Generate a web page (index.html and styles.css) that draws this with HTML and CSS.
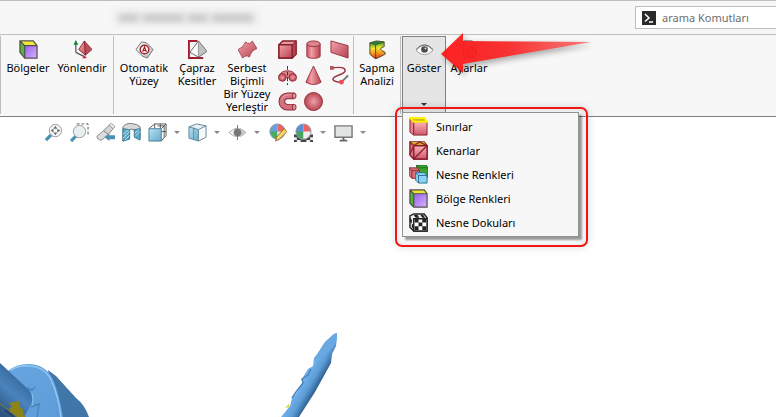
FILE: index.html
```html
<!DOCTYPE html>
<html lang="tr">
<head>
    <meta charset="UTF-8">
    <meta name="viewport" content="width=device-width, initial-scale=1.0">
    <title>Göster</title>
    <link rel="stylesheet" href="styles.css">
</head>
<body>
    <svg class="defs" width="0" height="0" aria-hidden="true">
        <defs>
            <linearGradient id="red" x1="0" y1="0" x2="1" y2="1"><stop offset="0" stop-color="#f3a3ab"/><stop offset="1" stop-color="#b5414f"/></linearGradient>
            <linearGradient id="redH"><stop offset="0" stop-color="#c65562"/><stop offset=".35" stop-color="#f0a0a8"/><stop offset="1" stop-color="#b8424f"/></linearGradient>
            <linearGradient id="pink" x1="0" y1="0" x2="0" y2="1"><stop offset="0" stop-color="#fbb3bb"/><stop offset="1" stop-color="#cf5a69"/></linearGradient>
            <radialGradient id="ball"><stop offset="0" stop-color="#eea0a7"/><stop offset="1" stop-color="#b84551"/></radialGradient>
            <linearGradient id="violet" x1="0" y1="0" x2="1" y2="1"><stop offset="0" stop-color="#9a63e8"/><stop offset="1" stop-color="#d6b2ff"/></linearGradient>
            <linearGradient id="gray" x1="0" y1="0" x2="1" y2="1"><stop offset="0" stop-color="#fff"/><stop offset="1" stop-color="#b5b8b9"/></linearGradient>
            <linearGradient id="blue" x1="0" y1="0" x2="1" y2="1"><stop offset="0" stop-color="#b9e2f3"/><stop offset="1" stop-color="#65a9c9"/></linearGradient>
            <linearGradient id="heat" x1="0" y1="0" x2="0" y2="1"><stop offset="0" stop-color="#35a53b"/><stop offset=".35" stop-color="#f0e42c"/><stop offset=".65" stop-color="#f39822"/><stop offset="1" stop-color="#d82920"/></linearGradient>
            <linearGradient id="arrowFill"><stop offset="0" stop-color="#ff1414"/><stop offset=".45" stop-color="#f62626"/><stop offset="1" stop-color="#fa7474"/></linearGradient>
            <linearGradient id="shaft" gradientUnits="userSpaceOnUse" x1="20" y1="60" x2="-4" y2="88"><stop offset="0" stop-color="#3a6da1"/><stop offset=".4" stop-color="#4a84bd"/><stop offset="1" stop-color="#2c547e"/></linearGradient>
            <linearGradient id="rod" gradientUnits="userSpaceOnUse" x1="298" y1="50" x2="320" y2="63"><stop offset="0" stop-color="#5a9bd5"/><stop offset=".4" stop-color="#6fb0ea"/><stop offset=".7" stop-color="#5c9dd8"/><stop offset="1" stop-color="#2f608f"/></linearGradient>
            <linearGradient id="body" x1="0" y1="0" x2="1" y2="1"><stop offset="0" stop-color="#67a6e0"/><stop offset="1" stop-color="#5d9cd8"/></linearGradient>
            <clipPath id="dot"><circle cx="10" cy="9" r="8"/></clipPath>
        </defs>
    </svg>

    <header class="title-bar">
        <div class="doc-name" aria-hidden="true"><i></i><i></i><i></i><i></i></div>
        <label class="search">
            <svg width="14" height="14" viewBox="0 0 14 14" aria-hidden="true"><rect width="14" height="14" fill="#2b2b2b"/><path d="M3 3l4 4-4 3.500M7 11h4" fill="none" stroke="#fff" stroke-width="1.500"/></svg>
            <input type="text" placeholder="arama Komutları" aria-label="arama Komutları">
        </label>
    </header>

    <nav class="ribbon">
        <div class="group regions">
            <button class="tool" type="button">
                <svg class="icon" viewBox="0 0 20 20"><path d="M1 1h14l4 5H6z" fill="#f2e63d"/><path d="M1 1l5 5v13l-5-6z" fill="#58b536"/><path d="M6 6h13v13H6z" fill="url(#violet)"/><path d="M1 1h14l4 5v13H6l-5-6zM1 1l5 5v13M6 6h13" fill="none" stroke="#505050" stroke-width="1.300"/></svg>
                <span>Bölgeler</span>
            </button>
            <button class="tool" type="button">
                <svg class="icon" viewBox="0 0 20 20"><path d="M3 13V4M3 13l10 5" fill="none" stroke="#555" stroke-width="1.300"/><path d="M.5 5L3 0l2.500 5z" fill="#11852b"/><path d="M11 16l4 3-5 .5z" fill="#e62a4c"/><path d="M12 1l8 9-7 6-7-6z" fill="url(#red)" stroke="#8c2733"/><path d="M12 1l8 9-7 6z" fill="#b64f5b"/><path d="M12 1l1 15" stroke="#7e2430"/></svg>
                <span>Yönlendir</span>
            </button>
        </div>

        <div class="group surfaces">
            <button class="tool" type="button">
                <svg class="icon" viewBox="0 0 20 20"><path d="M1 10l6-8 5 1 7 7-6 9-5-2z" fill="url(#gray)" stroke="#6d7172"/><circle cx="10" cy="10" r="4.500" fill="#fff8f8" stroke="#9f2230" stroke-width="1.500"/><path d="M8 12.500l2-5 2 5M8.500 11h3" fill="none" stroke="#a1121e" stroke-width="1.200"/></svg>
                <span>Otomatik<br>Yüzey</span>
            </button>
            <button class="tool sections" type="button">
                <svg class="icon" viewBox="0 0 20 20"><path d="M10 1H1v18h15" fill="none" stroke="#a41e30" stroke-width="2"/><path d="M11 1l9 11-9 6-9-5z" fill="#f7f8f8" stroke="#666"/><path d="M11 1l9 11-9 6z" fill="#bfc2c2" stroke="#777" stroke-width=".7"/></svg>
                <span>Çapraz<br>Kesitler</span>
            </button>
            <button class="tool freeform" type="button">
                <svg class="icon" viewBox="0 0 20 20"><path d="M0 10q5-1 8-8 4 4 7-1l5 8q-6 2-8 9-3-3-7 1z" fill="url(#red)" stroke="#a8505b"/></svg>
                <span>Serbest<br>Biçimli<br>Bir Yüzey<br>Yerleştir</span>
            </button>
            <div class="shapes">
                <button type="button" aria-label="Kutu"><svg class="icon" viewBox="0 0 20 20"><path d="M1 5l4-4h14v14l-4 4H1z" fill="#e39aa1" stroke="#871e2b" stroke-width="1.500"/><path d="M1 5h14v14H1z" fill="url(#red)" stroke="#871e2b" stroke-width="1.500"/><path d="M15 5l4-4v14l-4 4z" fill="#b54552" stroke="#871e2b"/></svg></button>
                <button type="button" aria-label="Silindir"><svg class="icon" viewBox="0 0 20 20"><path d="M3 4v13c0 3 14 3 14 0V4" fill="url(#redH)" stroke="#98313d"/><ellipse cx="10" cy="4" rx="7" ry="3" fill="#dc848d" stroke="#98313d"/></svg></button>
                <button type="button" aria-label="Düzlem"><svg class="icon" viewBox="0 0 20 20"><path d="M1 1l18 5v13L1 13z" fill="url(#red)" stroke="#98313d"/></svg></button>
                <button type="button" aria-label="Döndür"><svg class="icon" viewBox="0 0 20 20"><path d="M1 11q2-6 9-6t9 6l-5 5q-1-4-4-4t-4 4z" fill="#d9808a" stroke="#98313d"/><circle cx="4.500" cy="12" r="4" fill="url(#ball)" stroke="#98313d"/><circle cx="15.500" cy="12" r="4" fill="url(#ball)" stroke="#98313d"/><path d="M10 0v20" stroke="#333" stroke-dasharray="4 2"/></svg></button>
                <button type="button" aria-label="Koni"><svg class="icon" viewBox="0 0 20 20"><path d="M10 0l8 17q-8 5-16 0z" fill="url(#redH)" stroke="#98313d"/></svg></button>
                <button type="button" aria-label="Eğri"><svg class="icon" viewBox="0 0 20 20"><path d="M2 2q14-2 14 3c0 4-13 5-13 9q1 3 9 3" fill="none" stroke="#9d3340" stroke-width="1.500"/><path d="M12 17l7-7" stroke="#777" stroke-width="2"/><path d="M0 0h4v4H0z" fill="#b25560"/><circle cx="12" cy="17" r="2.500" fill="#ed4a52"/></svg></button>
                <button type="button" aria-label="Boru"><svg class="icon" viewBox="0 0 20 20"><path d="M17 4h-7a6 6 0 000 12h7" fill="none" stroke="#8f2836" stroke-width="7"/><path d="M17 4h-7a6 6 0 000 12h7" fill="none" stroke="#d3737d" stroke-width="5"/><path d="M16 3h-6a7 7 0 00-6 5" fill="none" stroke="#eda4ab"/><ellipse cx="17" cy="4" rx="2" ry="3" fill="#e48f98" stroke="#8f2836"/><ellipse cx="17" cy="16" rx="2" ry="3" fill="#e48f98" stroke="#8f2836"/></svg></button>
                <button type="button" aria-label="Küre"><svg class="icon" viewBox="0 0 20 20"><circle cx="10" cy="10" r="9.500" fill="url(#ball)" stroke="#98313d"/></svg></button>
            </div>
        </div>

        <div class="group analysis">
            <button class="tool" type="button">
                <svg class="icon" viewBox="0 0 20 20"><path d="M2 3l6 2v15l-6-5z" fill="url(#heat)"/><path d="M8 5l9-3v5q-8 2 1 6v2l-10 5z" fill="url(#heat)"/><path d="M2 3l7-2 8 1-9 3z" fill="#198b46"/><path d="M2 3l6 2v15l-6-5zM8 5l9-3v5q-8 2 1 6v2l-10 5M2 3l7-2 8 1" fill="none" stroke="#514b23"/></svg>
                <span>Sapma<br>Analizi</span>
            </button>
        </div>

        <div class="group view">
            <div class="show-menu">
                <button class="tool open" type="button" aria-haspopup="menu" aria-expanded="true">
                    <svg class="icon" viewBox="0 0 20 20"><path d="M1 11q9-11 18 0-9 9-18 0z" fill="#fff" stroke="#999"/><path d="M1 10q9-10 18 0" fill="none" stroke="#666"/><circle cx="10" cy="10" r="3.500" fill="#4b4b4b"/><circle cx="11" cy="9" r="1" fill="#ddd"/></svg>
                    <span>Göster</span>
                    <b class="caret"></b>
                </button>
                <div class="callout">
                    <div class="menu" role="menu">
                        <button type="button" role="menuitem"><svg class="icon" viewBox="0 0 20 20"><path d="M1 2l4 3v14l-4-3z" fill="#e5848e" stroke="#8c1d2c"/><path d="M5 5h14v14H5z" fill="url(#pink)" stroke="#8c1d2c"/><path d="M1 1h15l3 4H5z" fill="#c9bd21" stroke="#fff000" stroke-width="2"/></svg>Sınırlar</button>
                        <button type="button" role="menuitem"><svg class="icon" viewBox="0 0 20 20"><path d="M1 1h15l3 4v14H5l-4-4z" fill="#d97a83" stroke="#8c1d2c" stroke-width="1.500"/><path d="M2 1h14l2 4H5z" fill="#c8b322"/><path d="M5 5h14v14H5z" fill="url(#pink)" stroke="#8c1d2c" stroke-width="1.500"/><path d="M5 19L19 5M1 1l4 4-4 9M5 5l6-4 8 4" fill="none" stroke="#8c1d2c" stroke-width="1.300"/></svg>Kenarlar</button>
                        <button type="button" role="menuitem"><svg class="icon" viewBox="0 0 20 20"><path d="M8 0h10l2 3v10h-9L8 9z" fill="#3ba72b" stroke="#20651d"/><path d="M8 0l3 3h9" fill="none" stroke="#20651d"/><path d="M0 3h9l2 3v8H3l-3-3z" fill="#d7737d" stroke="#8c2633"/><path d="M0 3l3 3h8M3 6v8" fill="none" stroke="#8c2633"/><path d="M7 8h9l3 3v8h-9l-3-3z" fill="#8ed3f1" stroke="#286f93"/><path d="M7 8l3 3h9M10 11v8" fill="none" stroke="#286f93"/></svg>Nesne Renkleri</button>
                        <button type="button" role="menuitem"><svg class="icon" viewBox="0 0 20 20"><path d="M1 1h15l3 4H5z" fill="#eee32c"/><path d="M1 1l4 4v14l-4-4z" fill="#55b530"/><path d="M5 5h14v14H5z" fill="url(#violet)"/><path d="M1 1h15l3 4v14H5l-4-4zM1 1l4 4v14M5 5h14" fill="none" stroke="#505050" stroke-width="1.300"/></svg>Bölge Renkleri</button>
                        <button type="button" role="menuitem"><svg class="icon" viewBox="0 0 20 20"><path d="M1 3l4-2h11l3 4v14H5l-4-4z" fill="#eee" stroke="#222" stroke-width="1.500"/><path d="M5 6h14v13H5z" fill="#fff" stroke="#222" stroke-width="1.500"/><path d="M6 6h4v4H6zM14 6h4v4h-4zM10 10h4v4h-4zM6 14h4v4H6zM14 14h4v4h-4zM1 5l2 2v4l-2-2zM3 11l2 2v4l-2-2zM5 2h4l2 3H7zM12 2h3l2 3h-3z" fill="#222"/></svg>Nesne Dokuları</button>
                    </div>
                </div>
            </div>
            <div class="settings">
                <button class="tool" type="button">
                    <svg class="icon" viewBox="0 0 20 20"><path d="M4 18V1h9l4 4v3M4 18h3" fill="none" stroke="#666"/><circle cx="12" cy="13" r="5" fill="none" stroke="#555" stroke-width="2" stroke-dasharray="3 1"/><circle cx="12" cy="13" r="2" fill="none" stroke="#555"/></svg>
                    <span>Ayarlar</span>
                </button>
                <svg class="pointer" width="156" height="46" viewBox="0 0 156 46" aria-hidden="true"><path d="M3 21L25 0v8l128 1L25 31v9z" fill="url(#arrowFill)"/></svg>
            </div>
        </div>
    </nav>

    <main class="viewport">
        <div class="view-tools">
            <button type="button" aria-label="Sığdır"><svg class="icon" viewBox="0 0 20 20"><path d="M2 18l6-6" stroke="#4b92b4" stroke-width="3.500"/><circle cx="12" cy="8" r="6.500" fill="#f4f6f7" stroke="#999"/><path d="M12 3l2 3h-4zM12 13l-2-3h4zM7 8l3-2v4zM17 8l-3-2v4z" fill="#666"/></svg></button>
            <button type="button" aria-label="Alanı yakınlaştır"><svg class="icon" viewBox="0 0 20 20"><path d="M7 1h12v12" fill="none" stroke="#555" stroke-dasharray="3 2"/><path d="M1 19l6-6" stroke="#4b92b4" stroke-width="3.500"/><circle cx="10" cy="9" r="6.500" fill="#e9eff1" stroke="#999"/></svg></button>
            <button type="button" aria-label="Önceki görünüm"><svg class="icon" viewBox="0 0 20 20"><path d="M1 14l7-6 5 4-7 6q-5 0-5-4z" fill="#dbdcdc" stroke="#888"/><path d="M8 8l6-6 4 4-5 6z" fill="#d2d4d5" stroke="#888"/><path d="M14 2l2-2 4 4-2 2z" fill="#eee" stroke="#999"/><path d="M9 15l5-4v2h6v4h-6v2z" fill="#4a92b5"/></svg></button>
            <button type="button" aria-label="Kesit görünümü"><svg class="icon" viewBox="0 0 20 20"><path d="M1 4q3-4 9-3.500T19 4v12l-6-2V7q-3-1-5 0v9l-7 3z" fill="#d6d8d9" stroke="#747779"/><path d="M1 6l7 1v10l-7 2zM13 7l6-1v12l-6-3z" fill="#5ba8c9" stroke="#3e7994"/><path d="M1 12l6-5M1 16l7-7M3 18l5-5M13 11l5-4M14 14l5-5" stroke="#bee2ef"/></svg></button>
            <button type="button" aria-label="Görünüm yönü"><svg class="icon" viewBox="0 0 20 20"><path d="M7 1h12v12M1 6l6-5M14 6l5-5M14 19l5-6M13 1v5M14 9h5M7 1v5M10 3h7v12" fill="none" stroke="#555"/><path d="M1 6h13v13H1z" fill="url(#blue)" stroke="#4a849d"/></svg></button>
            <b class="caret"></b>
            <button type="button" aria-label="Görüntü stili"><svg class="icon" viewBox="0 0 20 20"><path d="M1 4l8-3 10 2-8 4z" fill="#e7f0f3"/><path d="M1 4l10 3v12L1 16z" fill="url(#blue)"/><path d="M11 7l8-4v12l-8 4z" fill="#f7f9f9"/><path d="M1 4l8-3 10 2v12l-8 4-10-3zM1 4l10 3v12M11 7l8-4M6 5v12" fill="none" stroke="#628897"/></svg></button>
            <b class="caret"></b>
            <button type="button" aria-label="Gizle veya göster"><svg class="icon" viewBox="0 0 20 20"><path d="M1 10q9-9 18 0-9 9-18 0z" fill="#f2f2f2" stroke="#aaa"/><path d="M10 5q5 0 9 5-4 5-9 5z" fill="#c7c7c7"/><circle cx="10" cy="10" r="4" fill="#777"/><path d="M10 2v16" stroke="#777"/></svg></button>
            <b class="caret"></b>
            <button type="button" aria-label="Görünümü düzenle"><svg class="icon" viewBox="0 0 20 20"><g clip-path="url(#dot)"><path d="M1 1h9v9H1z" fill="#6b9eda"/><path d="M10 1h9v9h-9z" fill="#ed6360"/><path d="M1 9h9v9H1z" fill="#48ad63"/><path d="M10 9h9v9h-9z" fill="#e6e7e7"/></g><circle cx="10" cy="9" r="8" fill="none" stroke="#7894a9"/><path d="M8 19l1-4 8-9 3 3-8 8z" fill="#ffd75e" stroke="#8c682d"/></svg></button>
            <button type="button" aria-label="Sahne uygula"><svg class="icon" viewBox="0 0 20 20"><path d="M0 12h20v8H0z" fill="#eee"/><path d="M0 12h4v3H0zM16 12h4v3h-4zM3 15h4v3H3zM13 15h4v3h-4zM7 17h6v3H7zM0 18h3v2H0zM17 18h3v2h-3z" fill="#444"/><g clip-path="url(#dot)"><path d="M1 1h9v9H1z" fill="#5a91d3"/><path d="M10 1h9v9h-9z" fill="#ed6360"/><path d="M1 9h9v9H1z" fill="#43a65c"/><path d="M10 9h9v9h-9z" fill="#efefef"/></g><circle cx="10" cy="9" r="8" fill="none" stroke="#88a0ae"/></svg></button>
            <b class="caret"></b>
            <button type="button" aria-label="Görünüm ayarları"><svg class="icon" viewBox="0 0 20 20"><path d="M1 3h18v12H1z" fill="#e2e4e4" stroke="#777" stroke-width="1.500"/><path d="M10 15v3M6 18.500h8" stroke="#666" stroke-width="2"/></svg></button>
            <b class="caret"></b>
        </div>
        <svg class="model" width="350" height="97" viewBox="0 0 350 97" aria-hidden="true">
            <path d="M48 50l8 6 20 22q9 7 13 19H55z" fill="#4176a9"/>
            <path d="M8 51q8-7 20-7 17 0 25 15 6 14 10 38H0V60z" fill="url(#body)"/>
            <path d="M11 50q8-5 19-4 16 1 22 16 6 13 9 35" fill="none" stroke="#93c6f3" stroke-width="1.500"/>
            <path d="M0 43l29 27q5 7 2 15l-7 12H0z" fill="url(#shaft)"/>
            <path d="M27 68l5 2 3-3M31 87l8-3-2 13" fill="none" stroke="#4685be" stroke-width="1.500"/>
            <path d="M32 73q2 7 0 13" fill="none" stroke="#8abfed"/>
            <path d="M0 83l10 8-1-3 3-1-3-4 10-2v5l4 4v4l3 3h-9L0 84z" fill="#8d8419"/>
            <path d="M5 90l9 7" stroke="#253f60" stroke-width="2"/>
            <path d="M337 13l-3 1-9 8-7 11-4 5-1 8-5 3-6 10 1 4-7 11-4 4-2 8-9 11h18l16-25 16-29 1-9 4-8 1-9z" fill="url(#rod)"/>
            <path d="M337 13l-3 1-9 8-7 11-4 7 10-4 11-11 2-7z" fill="#6aa8e1"/>
            <path d="M311 49l-3 6-6 4 1 4-7 9-4 6" fill="none" stroke="#4a85bd" stroke-width="1.500"/>
            <path d="M285 88l4-4v3z" fill="#d4cd2c"/>
        </svg>
    </main>
</body>
</html>
```

FILE: styles.css
```css
* {
    box-sizing: border-box;
}

body {
    display: flex;
    flex-direction: column;
    margin: 0;
    min-height: 100vh;
    overflow: hidden;
    background: #fff;
    color: #000;
    font-family: "Noto Sans", sans-serif;
    font-size: 11px;
    line-height: 13px;
}

button {
    margin: 0;
    padding: 0;
    border: 0;
    background: none;
    color: inherit;
    font: inherit;
}

.defs {
    position: absolute;
}

.icon {
    display: block;
    width: 19px;
    height: 19px;
    flex: none;
}

.title-bar {
    display: flex;
    align-items: center;
    justify-content: space-between;
    height: 35px;
    padding-left: 113px;
    background: #f7f7f7;
    border-top: 1px solid #bebebe;
    border-bottom: 1px solid #bebebe;
}

/* blurred document name */
.doc-name {
    display: flex;
    align-items: center;
    gap: 4px;
    width: 146px;
    height: 17px;
    padding: 0 6px;
    background: #eee;
    filter: blur(3px);
}

.doc-name i {
    height: 8px;
    flex: 2;
    background: #c8c8c8;
}

.doc-name i:nth-child(2),
.doc-name i:nth-child(4) {
    flex: 4;
}

.search {
    display: flex;
    align-items: center;
    gap: 6px;
    width: 141px;
    height: 23px;
    padding-left: 6px;
    background: #fff;
    border: 1px solid #bebebe;
    border-right: 0;
}

.search input {
    flex: 1;
    min-width: 0;
    padding: 0;
    border: 0;
    outline: 0;
    background: none;
    font: inherit;
}

.search input::placeholder {
    color: #6d6d6d;
    opacity: 1;
}

.ribbon {
    display: flex;
    height: 82px;
    padding-top: 1px;
    background: #f7f7f7;
    border-bottom: 1px solid #808080;
}

.group {
    display: flex;
    height: 78px;
    border-left: 1px solid #bebebe;
}

.regions {
    width: 113px;
}

.surfaces {
    width: 240px;
    padding-left: 3px;
}

.analysis {
    width: 47px;
}

.view {
    padding-left: 1px;
}

.tool {
    display: flex;
    flex-direction: column;
    align-items: center;
    width: 54px;
    padding-top: 4px;
    gap: 2px;
    white-space: nowrap;
}

.sections {
    width: 52px;
}

.freeform {
    width: 48px;
}

.analysis .tool {
    width: 46px;
}

.shapes {
    display: grid;
    grid-template-columns: repeat(3, 26px);
    grid-auto-rows: 26px;
    margin-left: 3px;
}

.shapes button {
    display: grid;
    place-items: center;
}

.caret {
    border: 3px solid transparent;
    border-top-color: #333;
    border-bottom: 0;
}

.show-menu,
.settings {
    position: relative;
}

.show-menu .open {
    width: 44px;
    height: 81px;
    padding-top: 3px;
    background: #e5e5e5;
    border: 1px solid #808080;
}

.open .caret {
    margin-top: auto;
    margin-bottom: 10px;
}

.settings .tool {
    width: 46px;
}

.pointer {
    position: absolute;
    top: -3px;
    left: -8px;
    opacity: 0.94;
    filter: drop-shadow(2px 3px 3px rgba(0, 0, 0, 0.35));
    pointer-events: none;
}

.callout {
    position: absolute;
    z-index: 2;
    top: 71px;
    left: -7px;
    padding: 3px 7px 8px 5px;
    border: 2px solid #f21616;
    border-radius: 7px;
    box-shadow: 0 0 8px rgba(0, 0, 0, 0.15), inset 0 0 8px rgba(0, 0, 0, 0.12);
}

.menu {
    display: flex;
    flex-direction: column;
    width: 177px;
    padding: 1px 2px 2px;
    background: #f7f7f7;
    border: 1px solid #929292;
    box-shadow: 3px 3px 2px rgba(0, 0, 0, 0.4);
}

.menu button {
    display: flex;
    align-items: center;
    gap: 8px;
    height: 24px;
    padding-left: 4px;
    text-align: left;
}

.viewport {
    display: flex;
    flex: 1;
    flex-direction: column;
    justify-content: space-between;
}

.view-tools {
    display: flex;
    align-items: center;
    padding: 5px 40px;
}

.view-tools button {
    display: grid;
    place-items: center;
    width: 26px;
    height: 20px;
}

.view-tools .caret {
    margin: 0 4px;
    border-top-color: #8b8b8b;
}

.model {
    display: block;
}
```
